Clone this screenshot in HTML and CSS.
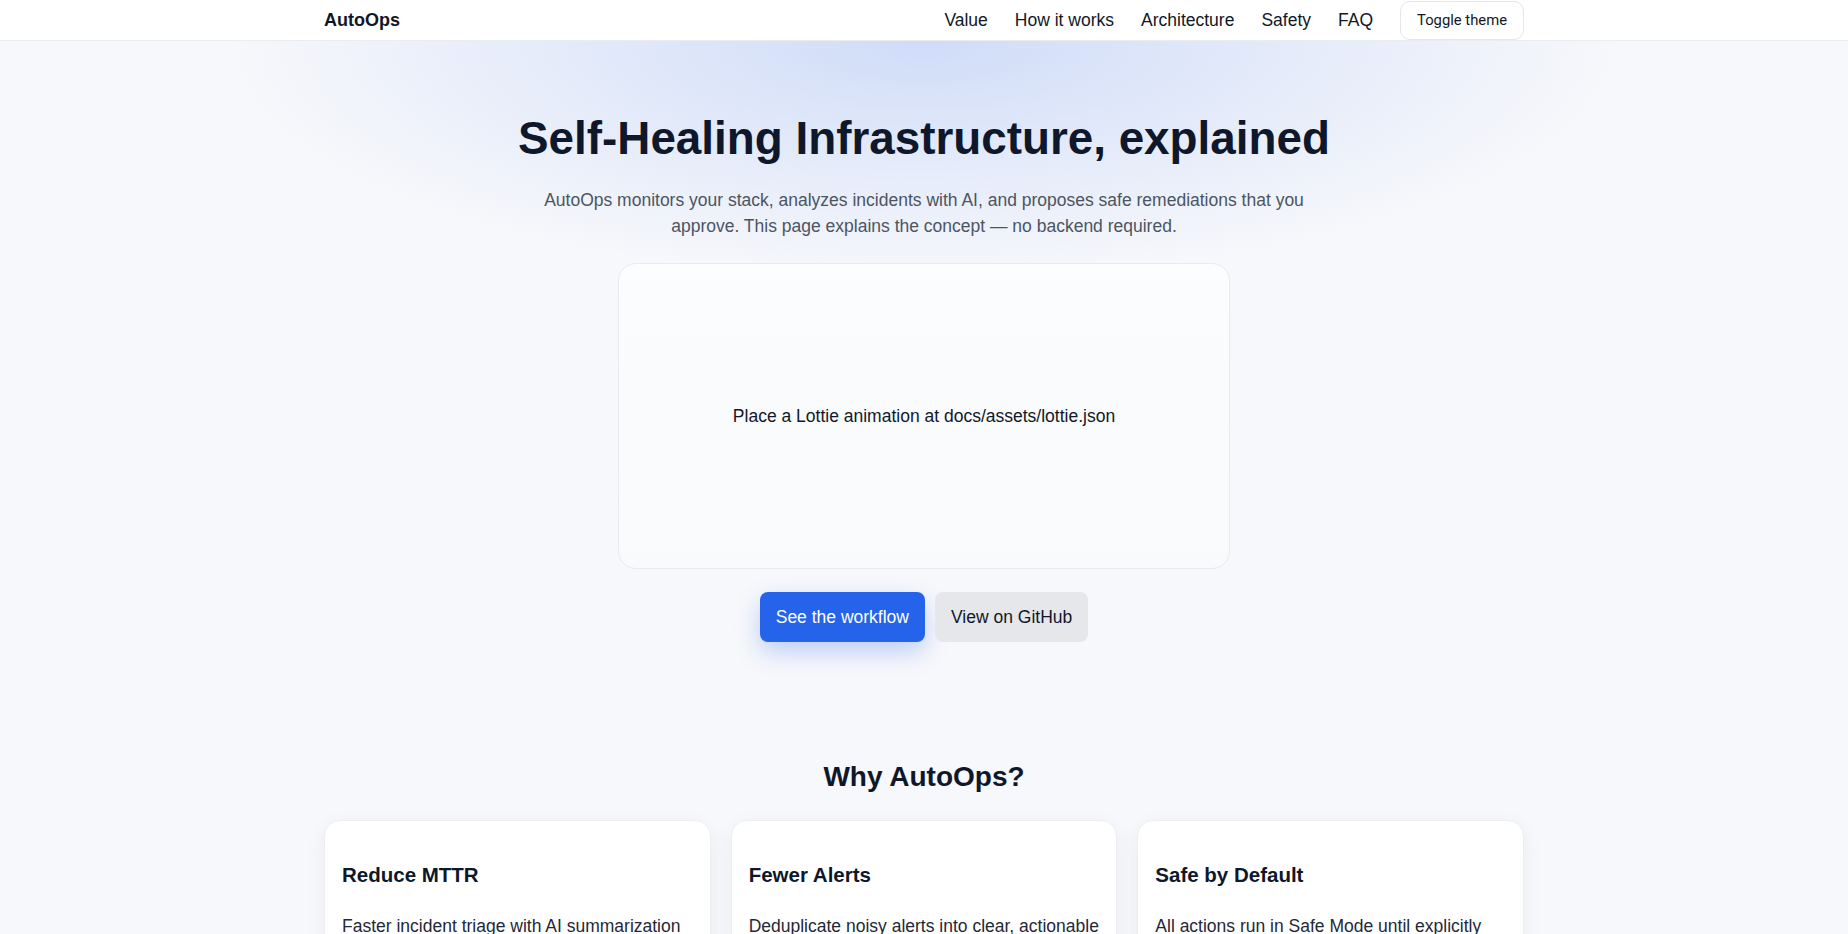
FILE: index.html
```html
<!DOCTYPE html>
<html lang="en">
<head>
<meta charset="utf-8">
<title>AutoOps — Self-Healing Infrastructure, explained</title>
<link rel="stylesheet" href="styles.css">
</head>
<body>
<header class="topbar">
  <div class="topbar-inner">
    <a class="logo" href="#">AutoOps</a>
    <nav class="menu">
      <a href="#value">Value</a>
      <a href="#how">How it works</a>
      <a href="#arch">Architecture</a>
      <a href="#safety">Safety</a>
      <a href="#faq">FAQ</a>
      <button class="theme-btn" type="button">Toggle theme</button>
    </nav>
  </div>
</header>

<main>
  <section class="hero">
    <h1 class="hero-title">Self-Healing Infrastructure, explained</h1>
    <p class="hero-lead">AutoOps monitors your stack, analyzes incidents with AI, and proposes safe remediations that you approve. This page explains the concept — no backend required.</p>
    <div class="lottie">Place a Lottie animation at docs/assets/lottie.json</div>
    <div class="actions">
      <a class="btn btn-primary" href="#how">See the workflow</a>
      <a class="btn btn-ghost" href="#">View on GitHub</a>
    </div>
  </section>

  <section class="block why" id="value">
    <h2 class="block-title">Why AutoOps?</h2>
    <div class="cards">
      <article class="card">
        <h3>Reduce MTTR</h3>
        <p>Faster incident triage with AI summarization and suggested root causes.</p>
      </article>
      <article class="card">
        <h3>Fewer Alerts</h3>
        <p>Deduplicate noisy alerts into clear, actionable incidents your team can trust.</p>
      </article>
      <article class="card">
        <h3>Safe by Default</h3>
        <p>All actions run in Safe Mode until explicitly approved by a human operator.</p>
      </article>
    </div>
  </section>

  <section class="block" id="how">
    <h2 class="block-title">How it works</h2>
    <div class="cards">
      <article class="card"><h3>1. Detect</h3><p>Metrics, logs and events are collected and correlated into incidents.</p></article>
      <article class="card"><h3>2. Analyze</h3><p>AI summarizes the incident and proposes a remediation plan.</p></article>
      <article class="card"><h3>3. Approve &amp; Heal</h3><p>You review the plan, approve it, and AutoOps applies the fix.</p></article>
    </div>
  </section>

  <section class="block" id="arch">
    <h2 class="block-title">Architecture</h2>
    <div class="cards">
      <article class="card"><h3>Collectors</h3><p>Lightweight agents stream telemetry from your services.</p></article>
      <article class="card"><h3>Brain</h3><p>An analysis engine groups signals and drafts remediations.</p></article>
      <article class="card"><h3>Executors</h3><p>Runbooks execute approved actions with full audit trails.</p></article>
    </div>
  </section>

  <section class="block" id="safety">
    <h2 class="block-title">Safety</h2>
    <div class="cards">
      <article class="card"><h3>Safe Mode</h3><p>Nothing changes in production without an explicit approval.</p></article>
      <article class="card"><h3>Audit Log</h3><p>Every proposal and action is recorded and reviewable.</p></article>
      <article class="card"><h3>Rollback</h3><p>Each remediation ships with a tested rollback path.</p></article>
    </div>
  </section>

  <section class="block" id="faq">
    <h2 class="block-title">FAQ</h2>
    <div class="cards">
      <article class="card"><h3>Do I need a backend?</h3><p>No. This page only explains the concept.</p></article>
      <article class="card"><h3>Is it autonomous?</h3><p>Only after you explicitly allow it.</p></article>
      <article class="card"><h3>Which stacks?</h3><p>Any stack that exposes metrics and logs.</p></article>
    </div>
  </section>
</main>

<footer class="footer">© AutoOps</footer>
</body>
</html>
```

FILE: styles.css
```css
* { box-sizing: border-box; }

html, body { margin: 0; padding: 0; }

body {
  font-family: "Liberation Sans", Arial, Helvetica, sans-serif;
  font-size: 17.5px;
  line-height: 1.6;
  color: #111827;
  background: #f7f8fb;
}

a { color: inherit; text-decoration: none; }

/* top bar */
.topbar {
  background: rgba(255, 255, 255, 0.95);
  border-bottom: 1px solid #eaecf0;
}

.topbar-inner {
  max-width: 1200px;
  margin: 0 auto;
  height: 40px;
  display: flex;
  align-items: center;
  justify-content: space-between;
}

.logo {
  font-size: 18px;
  font-weight: 700;
  color: #0f172a;
}

.menu {
  display: flex;
  align-items: center;
  gap: 27px;
}

.menu a {
  font-size: 17.5px;
  color: #111827;
}

.theme-btn {
  height: 39px;
  padding: 0 16px;
  border: 1px solid #e3e6ea;
  border-radius: 10px;
  background: #ffffff;
  font-family: Roboto, "Noto Sans", sans-serif;
  font-size: 14.8px;
  color: #111827;
  cursor: pointer;
}

/* hero */
.hero {
  padding: 71px 24px 0;
  text-align: center;
  background: radial-gradient(ellipse 700px 240px at 50% 0, rgba(37, 99, 235, 0.19), rgba(37, 99, 235, 0) 100%);
}

.hero-title {
  margin: 0;
  font-size: 45.8px;
  line-height: 1.2;
  font-weight: 700;
  color: #0f172a;
}

.hero-lead {
  max-width: 780px;
  margin: 20px auto 0;
  font-size: 17.5px;
  line-height: 1.5;
  color: #4b5563;
}

.lottie {
  width: 612px;
  height: 306px;
  margin: 24px auto 0;
  display: flex;
  align-items: center;
  justify-content: center;
  border: 1px solid #e7eaef;
  border-radius: 18px;
  background: linear-gradient(180deg, #fcfdfe 0%, #fafbfd 40%, #f9fafc 100%);
  color: #111827;
}

.actions {
  display: flex;
  justify-content: center;
  gap: 10px;
  margin-top: 23px;
}

.btn {
  display: inline-block;
  padding: 12px 16px;
  line-height: 26px;
  border-radius: 8px;
  font-size: 17.5px;
}

.btn-primary {
  background: #2563eb;
  color: #ffffff;
  box-shadow: 0 10px 24px rgba(37, 99, 235, 0.28);
}

.btn-ghost {
  background: #e5e7eb;
  color: #111827;
}

/* sections */
.block {
  max-width: 1200px;
  margin: 0 auto;
  padding-top: 118px;
}

.block + .block { padding-top: 90px; }

.block-title {
  margin: 0 0 26px;
  font-size: 28px;
  line-height: 1.2;
  text-align: center;
  color: #0f172a;
}

.cards {
  display: grid;
  grid-template-columns: repeat(3, 1fr);
  gap: 20px;
}

.card {
  background: #ffffff;
  border: 1px solid #eceef2;
  border-radius: 16px;
  padding: 17px;
  box-shadow: 0 6px 22px rgba(15, 23, 42, 0.05);
}

.card h3 {
  margin: 20.5px 0;
  font-size: 20.5px;
  color: #0f172a;
}

.card p {
  margin: 17.5px 0;
  color: #1f2937;
}

.footer {
  max-width: 1200px;
  margin: 0 auto;
  padding: 120px 0 60px;
  text-align: center;
  color: #6b7280;
}
```
